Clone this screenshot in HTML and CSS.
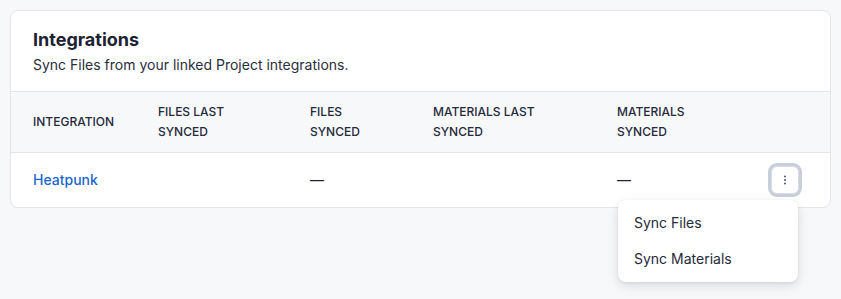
FILE: index.html
```html
<!DOCTYPE html>
<html lang="en">
<head>
    <meta charset="UTF-8">
    <meta name="viewport" content="width=device-width, initial-scale=1.0">
    <title>Integrations</title>
    <link rel="stylesheet" href="styles.css">
</head>
<body>
    <div class="card">
        <div class="card-header">
            <h2 class="card-title">Integrations</h2>
            <p class="card-subtitle">Sync Files from your linked Project integrations.</p>
        </div>

        <table class="table">
            <colgroup>
                <col class="col-name">
                <col class="col-files-last">
                <col class="col-files">
                <col class="col-materials-last">
                <col class="col-materials">
                <col>
            </colgroup>
            <thead>
                <tr>
                    <th>Integration</th>
                    <th>Files last<br>synced</th>
                    <th>Files<br>synced</th>
                    <th>Materials last<br>synced</th>
                    <th>Materials<br>synced</th>
                    <th></th>
                </tr>
            </thead>
            <tbody>
                <tr>
                    <td><a href="#" class="link">Heatpunk</a></td>
                    <td></td>
                    <td>&mdash;</td>
                    <td></td>
                    <td>&mdash;</td>
                    <td class="cell-actions">
                        <div class="actions">
                            <button class="menu-btn" aria-label="Actions">
                                <svg width="12" height="12" viewBox="0 0 12 12">
                                    <circle cx="6" cy="2.4" r="1" fill="#4b5263"/>
                                    <circle cx="6" cy="6" r="1" fill="#4b5263"/>
                                    <circle cx="6" cy="9.6" r="1" fill="#4b5263"/>
                                </svg>
                            </button>
                            <div class="menu">
                                <div class="menu-item">Sync Files</div>
                                <div class="menu-item">Sync Materials</div>
                            </div>
                        </div>
                    </td>
                </tr>
            </tbody>
        </table>
    </div>
</body>
</html>
```

FILE: styles.css
```css
html {
    height: 100%;
}

body {
    margin: 0;
    padding: 10px;
    min-height: 100%;
    box-sizing: border-box;
    background-color: #f7f8fa;
    font-family: 'Inter', 'Noto Sans', sans-serif;
    color: #1f2336;
}

.card {
    background-color: white;
    border: 1px solid #e3e5ea;
    border-radius: 8px;
}

.card-header {
    padding: 15px 22px 16px;
    border-bottom: 1px solid #e3e5ea;
}

.card-title {
    margin: 0 0 1px;
    font-size: 18px;
    line-height: 28px;
    font-weight: 700;
    color: #1c2133;
}

.card-subtitle {
    margin: 0;
    font-size: 14px;
    line-height: 20px;
    color: #2a2e3d;
}

.table {
    width: 100%;
    border-collapse: collapse;
    table-layout: fixed;
}

.col-name { width: 125px; }
.col-files-last { width: 152px; }
.col-files { width: 123px; }
.col-materials-last { width: 184px; }
.col-materials { width: 150px; }

.table th {
    background-color: #f7f8fa;
    padding: 10px 0 10px 22px;
    text-align: left;
    font-size: 12px;
    line-height: 20px;
    font-weight: 500;
    text-transform: uppercase;
    white-space: nowrap;
    color: #252a3b;
    border-bottom: 1px solid #e3e5ea;
}

.table td {
    padding: 17px 0 17px 22px;
    font-size: 14px;
    line-height: 20px;
    color: #1f2336;
    vertical-align: middle;
}

.link {
    color: #1a66cc;
    text-decoration: none;
    font-weight: 500;
}

.table td.cell-actions {
    padding: 0 31px 0 0;
    text-align: right;
}

.actions {
    position: relative;
    display: inline-block;
    vertical-align: middle;
}

.menu-btn {
    display: flex;
    align-items: center;
    justify-content: center;
    width: 28px;
    height: 28px;
    padding: 0;
    background-color: white;
    border: 1px solid #d9dde4;
    border-radius: 6px;
    box-shadow: 0 0 0 3px #c8cfda;
    cursor: pointer;
}

.menu {
    position: absolute;
    top: calc(100% + 6px);
    right: 1px;
    width: 180px;
    padding: 5px 0;
    background-color: white;
    border-radius: 8px;
    box-shadow: 0 4px 12px rgba(20, 25, 40, 0.12), 0 1px 3px rgba(20, 25, 40, 0.08);
    text-align: left;
}

.menu-item {
    padding: 8px 16px;
    font-size: 14px;
    line-height: 20px;
    color: #272b3c;
    cursor: pointer;
}
```
